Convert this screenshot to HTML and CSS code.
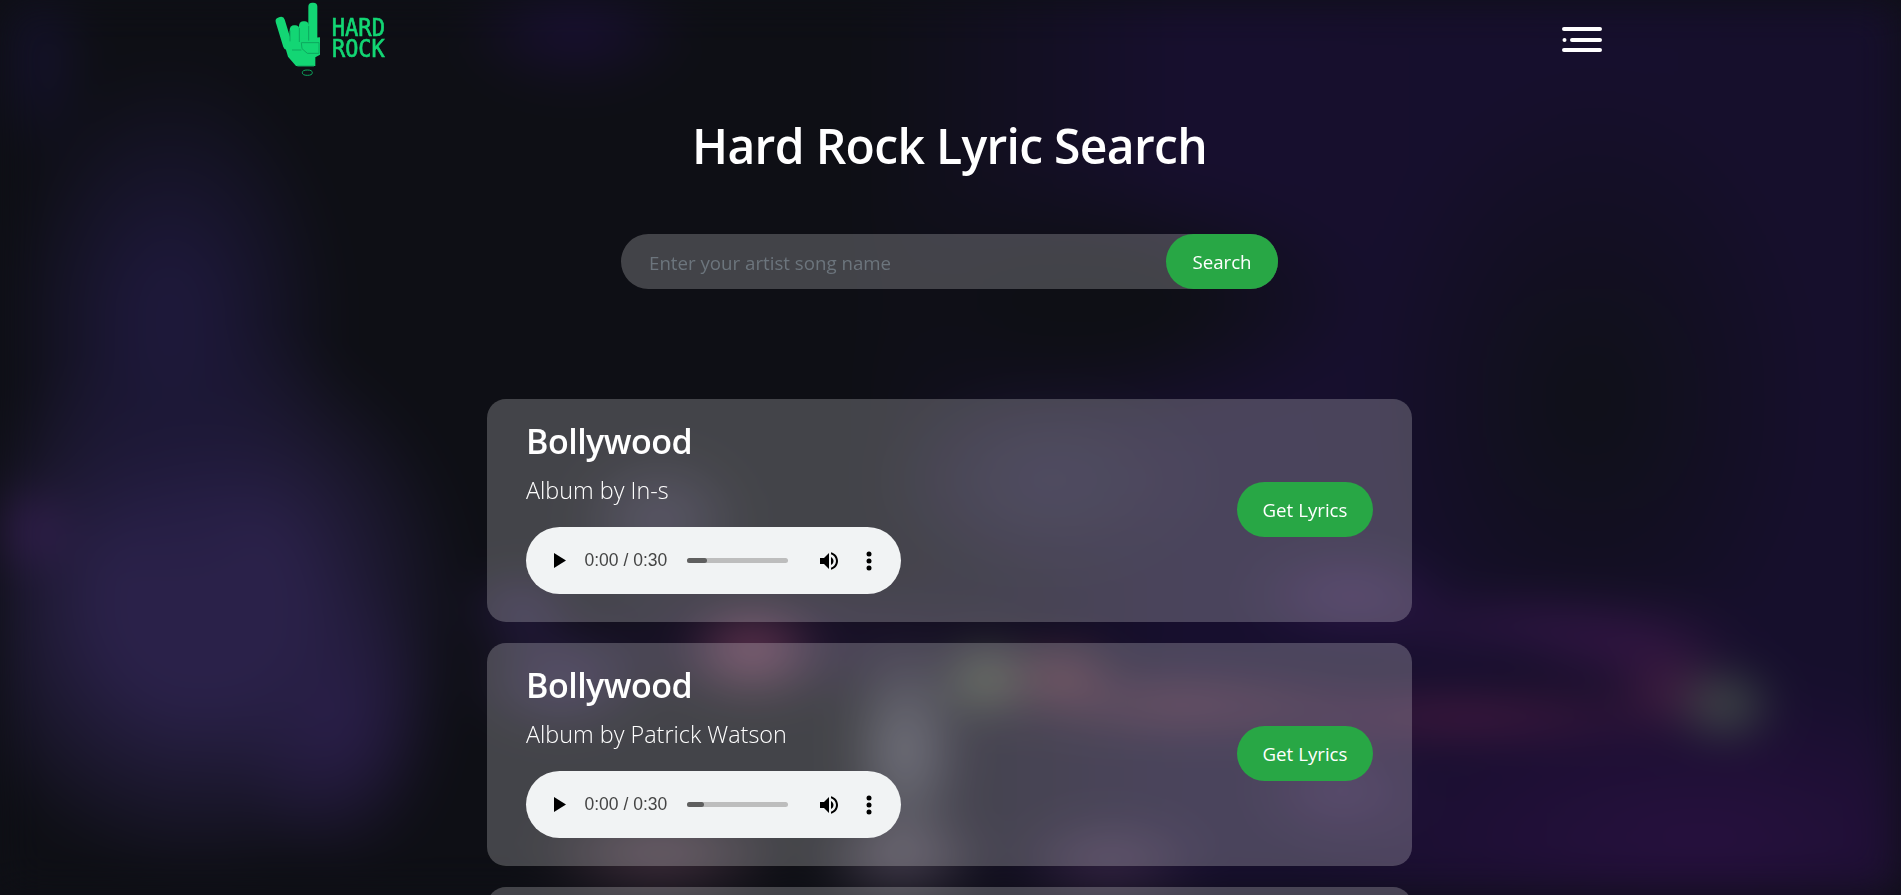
FILE: index.html
```html
<!DOCTYPE html>
<html lang="en">
  <head>
    <meta charset="UTF-8" />
    <meta name="viewport" content="width=device-width, initial-scale=1.0" />
    <title>Hard Rock Lyric Search</title>
    <link rel="stylesheet" href="styles.css">
  </head>
  <body>
    <!-- Navbar -->
    <nav class="navbar">
      <a class="logo" href="#" aria-label="Hard Rock">
        <svg width="150" height="85" viewBox="0 0 450 255">
          <g class="hand">
            <rect x="58" y="50" width="28" height="100" rx="12" transform="rotate(-17 71 100)" />
            <rect x="89" y="76" width="30" height="74" rx="13" />
            <rect x="117" y="64" width="30" height="82" rx="13" />
            <rect x="145" y="8" width="27" height="125" rx="12" />
            <path d="M70 122 L180 112 L180 164 L166 172 L166 198 L108 198 L84 170 Z" />
          </g>
          <g class="hand-lines">
            <path d="M90 124 V92 M118 126 V84 M146 122 V78" />
            <path d="M124 128 H177 V160 H142 L126 146 Z" />
            <path d="M96 150 L124 150 M112 198 H162" />
            <ellipse cx="142" cy="218" rx="15" ry="8" />
          </g>
          <text class="logo-text">
            <tspan x="215" y="108" textLength="160" lengthAdjust="spacingAndGlyphs">HARD</tspan>
            <tspan x="216" y="172" textLength="158" lengthAdjust="spacingAndGlyphs">ROCK</tspan>
          </text>
        </svg>
      </a>
      <button class="menu-btn" type="button" aria-label="Menu">
        <svg width="40" height="26" viewBox="0 0 40 26">
          <path d="M2 2 H38 M10 13 H38 M2 23 H38" />
          <circle cx="2.5" cy="13" r="2" />
        </svg>
      </button>
    </nav>

    <main>
      <h1 class="page-title">Hard Rock Lyric Search</h1>

      <!-- Search -->
      <form class="search-box">
        <input type="text" placeholder="Enter your artist song name" />
        <button class="pill-btn" type="button">Search</button>
      </form>

      <!-- Results -->
      <section class="results">
        <article class="song-card">
          <div class="song-info">
            <h3 class="song-name">Bollywood</h3>
            <p class="song-author">Album by In-s</p>
            <div class="player">
              <svg class="play-icon" width="12" height="15" viewBox="0 0 12 15"><path d="M0 0 L12 7.5 L0 15 Z" /></svg>
              <span class="player-time">0:00 / 0:30</span>
              <div class="player-track"><div class="player-fill" style="width: 20%"></div></div>
              <svg class="volume-icon" width="24" height="24" viewBox="0 0 24 24"><path d="M3 9v6h4l5 5V4L7 9H3zm13.5 3c0-1.77-1.02-3.29-2.5-4.03v8.05c1.48-.73 2.5-2.25 2.5-4.02zM14 3.23v2.06c2.89.86 5 3.54 5 6.71s-2.11 5.85-5 6.71v2.06c4.01-.91 7-4.49 7-8.77s-2.99-7.86-7-8.77z" /></svg>
              <svg class="more-icon" width="6" height="20" viewBox="0 0 6 20"><circle cx="3" cy="3" r="2.5" /><circle cx="3" cy="10" r="2.5" /><circle cx="3" cy="17" r="2.5" /></svg>
            </div>
          </div>
          <button class="pill-btn lyrics-btn" type="button">Get Lyrics</button>
        </article>

        <article class="song-card">
          <div class="song-info">
            <h3 class="song-name">Bollywood</h3>
            <p class="song-author">Album by Patrick Watson</p>
            <div class="player">
              <svg class="play-icon" width="12" height="15" viewBox="0 0 12 15"><path d="M0 0 L12 7.5 L0 15 Z" /></svg>
              <span class="player-time">0:00 / 0:30</span>
              <div class="player-track"><div class="player-fill" style="width: 17%"></div></div>
              <svg class="volume-icon" width="24" height="24" viewBox="0 0 24 24"><path d="M3 9v6h4l5 5V4L7 9H3zm13.5 3c0-1.77-1.02-3.29-2.5-4.03v8.05c1.48-.73 2.5-2.25 2.5-4.02zM14 3.23v2.06c2.89.86 5 3.54 5 6.71s-2.11 5.85-5 6.71v2.06c4.01-.91 7-4.49 7-8.77s-2.99-7.86-7-8.77z" /></svg>
              <svg class="more-icon" width="6" height="20" viewBox="0 0 6 20"><circle cx="3" cy="3" r="2.5" /><circle cx="3" cy="10" r="2.5" /><circle cx="3" cy="17" r="2.5" /></svg>
            </div>
          </div>
          <button class="pill-btn lyrics-btn" type="button">Get Lyrics</button>
        </article>

        <article class="song-card"></article>
      </section>
    </main>
  </body>
</html>
```

FILE: styles.css
```css
html,
body {
  height: 100%;
}

body {
  margin: 0;
  overflow: hidden;
  font-family: "Open Sans", "Noto Sans", sans-serif;
  color: #fff;
  background-color: #0e0f15;
}

/* Blurred concert photo behind the page */
body::before {
  content: "";
  position: fixed;
  inset: 0;
  z-index: -1;
  filter: blur(22px);
  background-color: #0e0f15;
  background-image:
    radial-gradient(ellipse 60px 50px at 25px 530px, #351f52 0%, transparent 100%),
    radial-gradient(ellipse 50px 110px at 40px 60px, #15122e 0%, transparent 100%),
    radial-gradient(ellipse 170px 260px at 170px 320px, #1d1839 20%, transparent 100%),
    radial-gradient(ellipse 270px 280px at 200px 600px, #2a2149 35%, transparent 100%),
    radial-gradient(ellipse 110px 150px at 335px 720px, #2a1c4a 0%, transparent 100%),
    radial-gradient(ellipse 120px 70px at 575px 25px, #1a1035 0%, transparent 100%),
    radial-gradient(ellipse 55px 40px at 1725px 705px, #4e5e50 0%, transparent 100%),
    radial-gradient(ellipse 60px 40px at 1670px 690px, #4a2045 0%, transparent 100%),
    radial-gradient(ellipse 120px 30px at 1630px 650px, #3a1648 0%, transparent 100%),
    radial-gradient(ellipse 270px 24px at 1460px 716px, #521c45 0%, transparent 100%),
    radial-gradient(ellipse 200px 26px at 1180px 705px, #54283f 0%, transparent 100%),
    radial-gradient(ellipse 75px 50px at 752px 650px, #6e3a55 0%, transparent 100%),
    radial-gradient(ellipse 50px 40px at 985px 680px, #566348 0%, transparent 100%),
    radial-gradient(ellipse 65px 28px at 1060px 675px, #6a3545 0%, transparent 100%),
    radial-gradient(ellipse 60px 110px at 905px 750px, #50505e 0%, transparent 100%),
    radial-gradient(ellipse 130px 50px at 660px 855px, #4a3545 0%, transparent 100%),
    radial-gradient(ellipse 90px 50px at 900px 860px, #4f4658 0%, transparent 100%),
    radial-gradient(ellipse 100px 50px at 1110px 865px, #3a2848 0%, transparent 100%),
    radial-gradient(ellipse 95px 55px at 560px 680px, #2c2048 0%, transparent 100%),
    radial-gradient(ellipse 90px 70px at 660px 520px, #2e2a40 0%, transparent 100%),
    radial-gradient(ellipse 60px 40px at 520px 610px, #2a1c4a 0%, transparent 100%),
    radial-gradient(ellipse 170px 100px at 1050px 480px, #1f1a35 0%, transparent 100%),
    radial-gradient(ellipse 90px 50px at 1340px 790px, #2f1a48 0%, transparent 100%),
    radial-gradient(ellipse 210px 32px at 1540px 625px, #331648 0%, transparent 100%),
    radial-gradient(ellipse 110px 45px at 1350px 595px, #321a4e 0%, transparent 100%),
    radial-gradient(ellipse 420px 170px at 1700px 840px, #27103e 0%, transparent 100%),
    radial-gradient(ellipse 230px 330px at 1590px 400px, #0f1018 0%, transparent 100%),
    radial-gradient(ellipse 280px 130px at 1090px 300px, #0e0f15 30%, transparent 100%),
    radial-gradient(ellipse 300px 70px at 780px 640px, #1d1230 0%, transparent 100%),
    linear-gradient(90deg, transparent 45%, #170f2e 62%, #160f2c 100%);
}

/* Navbar */
.navbar {
  display: flex;
  justify-content: space-between;
  align-items: flex-start;
  height: 85px;
  padding: 0 299px 0 260px;
}

.logo {
  display: block;
  height: 85px;
}

.hand {
  fill: #13d674;
}

.hand-lines {
  fill: none;
  stroke: #0da85e;
  stroke-width: 3;
}

.logo-text {
  font-family: "DejaVu Sans Mono", monospace;
  font-size: 72px;
  fill: #13d674;
  stroke: #13d674;
  stroke-width: 2;
}

.menu-btn {
  display: block;
  margin-top: 27px;
  padding: 0;
  background: none;
  border: none;
  cursor: pointer;
}

.menu-btn svg {
  display: block;
}

.menu-btn path {
  fill: none;
  stroke: #fff;
  stroke-width: 4;
  stroke-linecap: round;
}

.menu-btn circle {
  fill: #fff;
}

/* Title and search */
main {
  margin-right: 2px;
}

.page-title {
  margin: 31px 0 0;
  font-size: 48px;
  line-height: 60px;
  font-weight: 600;
  letter-spacing: -0.68px;
  text-align: center;
}

.search-box {
  display: flex;
  justify-content: space-between;
  width: 657px;
  height: 55px;
  margin: 58px auto 0;
  border-radius: 28px;
  background-color: rgba(255, 255, 255, 0.22);
}

.search-box input {
  flex: 1;
  min-width: 0;
  padding: 2px 0 0 28px;
  background: none;
  border: none;
  outline: none;
  color: #fff;
  font-family: inherit;
  font-size: 18.7px;
}

.search-box input::placeholder {
  color: #6c757d;
}

.pill-btn {
  height: 55px;
  border: none;
  border-radius: 28px;
  background-color: #28a745;
  color: #fff;
  font-family: inherit;
  font-size: 18.7px;
  cursor: pointer;
}

.search-box .pill-btn {
  width: 112px;
}

/* Results */
.results {
  width: 925px;
  margin: 110px auto 0;
  display: flex;
  flex-direction: column;
  gap: 21px;
}

.song-card {
  display: flex;
  justify-content: space-between;
  align-items: center;
  box-sizing: border-box;
  height: 223px;
  padding: 0 39px;
  border-radius: 19px;
  background-color: rgba(255, 255, 255, 0.225);
}

.song-info {
  margin-top: -8px;
}

.song-name {
  margin: 0;
  font-size: 34px;
  line-height: 44px;
  font-weight: 600;
  letter-spacing: -0.5px;
}

.song-author {
  margin: 9px 0 0;
  font-size: 23.4px;
  line-height: 36px;
  font-weight: 300;
}

/* Audio player */
.player {
  display: flex;
  align-items: center;
  box-sizing: border-box;
  width: 375px;
  height: 67px;
  margin-top: 19px;
  padding-left: 28px;
  border-radius: 34px;
  background-color: #f1f3f4;
  color: #444;
}

.play-icon {
  flex: none;
  fill: #000;
}

.player-time {
  margin-left: 18.5px;
  font-family: "Liberation Sans", Arial, sans-serif;
  font-size: 17.5px;
}

.player-track {
  width: 101px;
  height: 5px;
  margin-left: 19.5px;
  border-radius: 3px;
  background-color: #bdbdbd;
}

.player-fill {
  height: 100%;
  border-radius: 3px;
  background-color: #5f5f5f;
}

.volume-icon {
  flex: none;
  margin-left: 29px;
  fill: #000;
}

.more-icon {
  flex: none;
  margin-left: 25px;
  fill: #000;
}

.lyrics-btn {
  width: 136px;
  margin-top: -2px;
}
```
